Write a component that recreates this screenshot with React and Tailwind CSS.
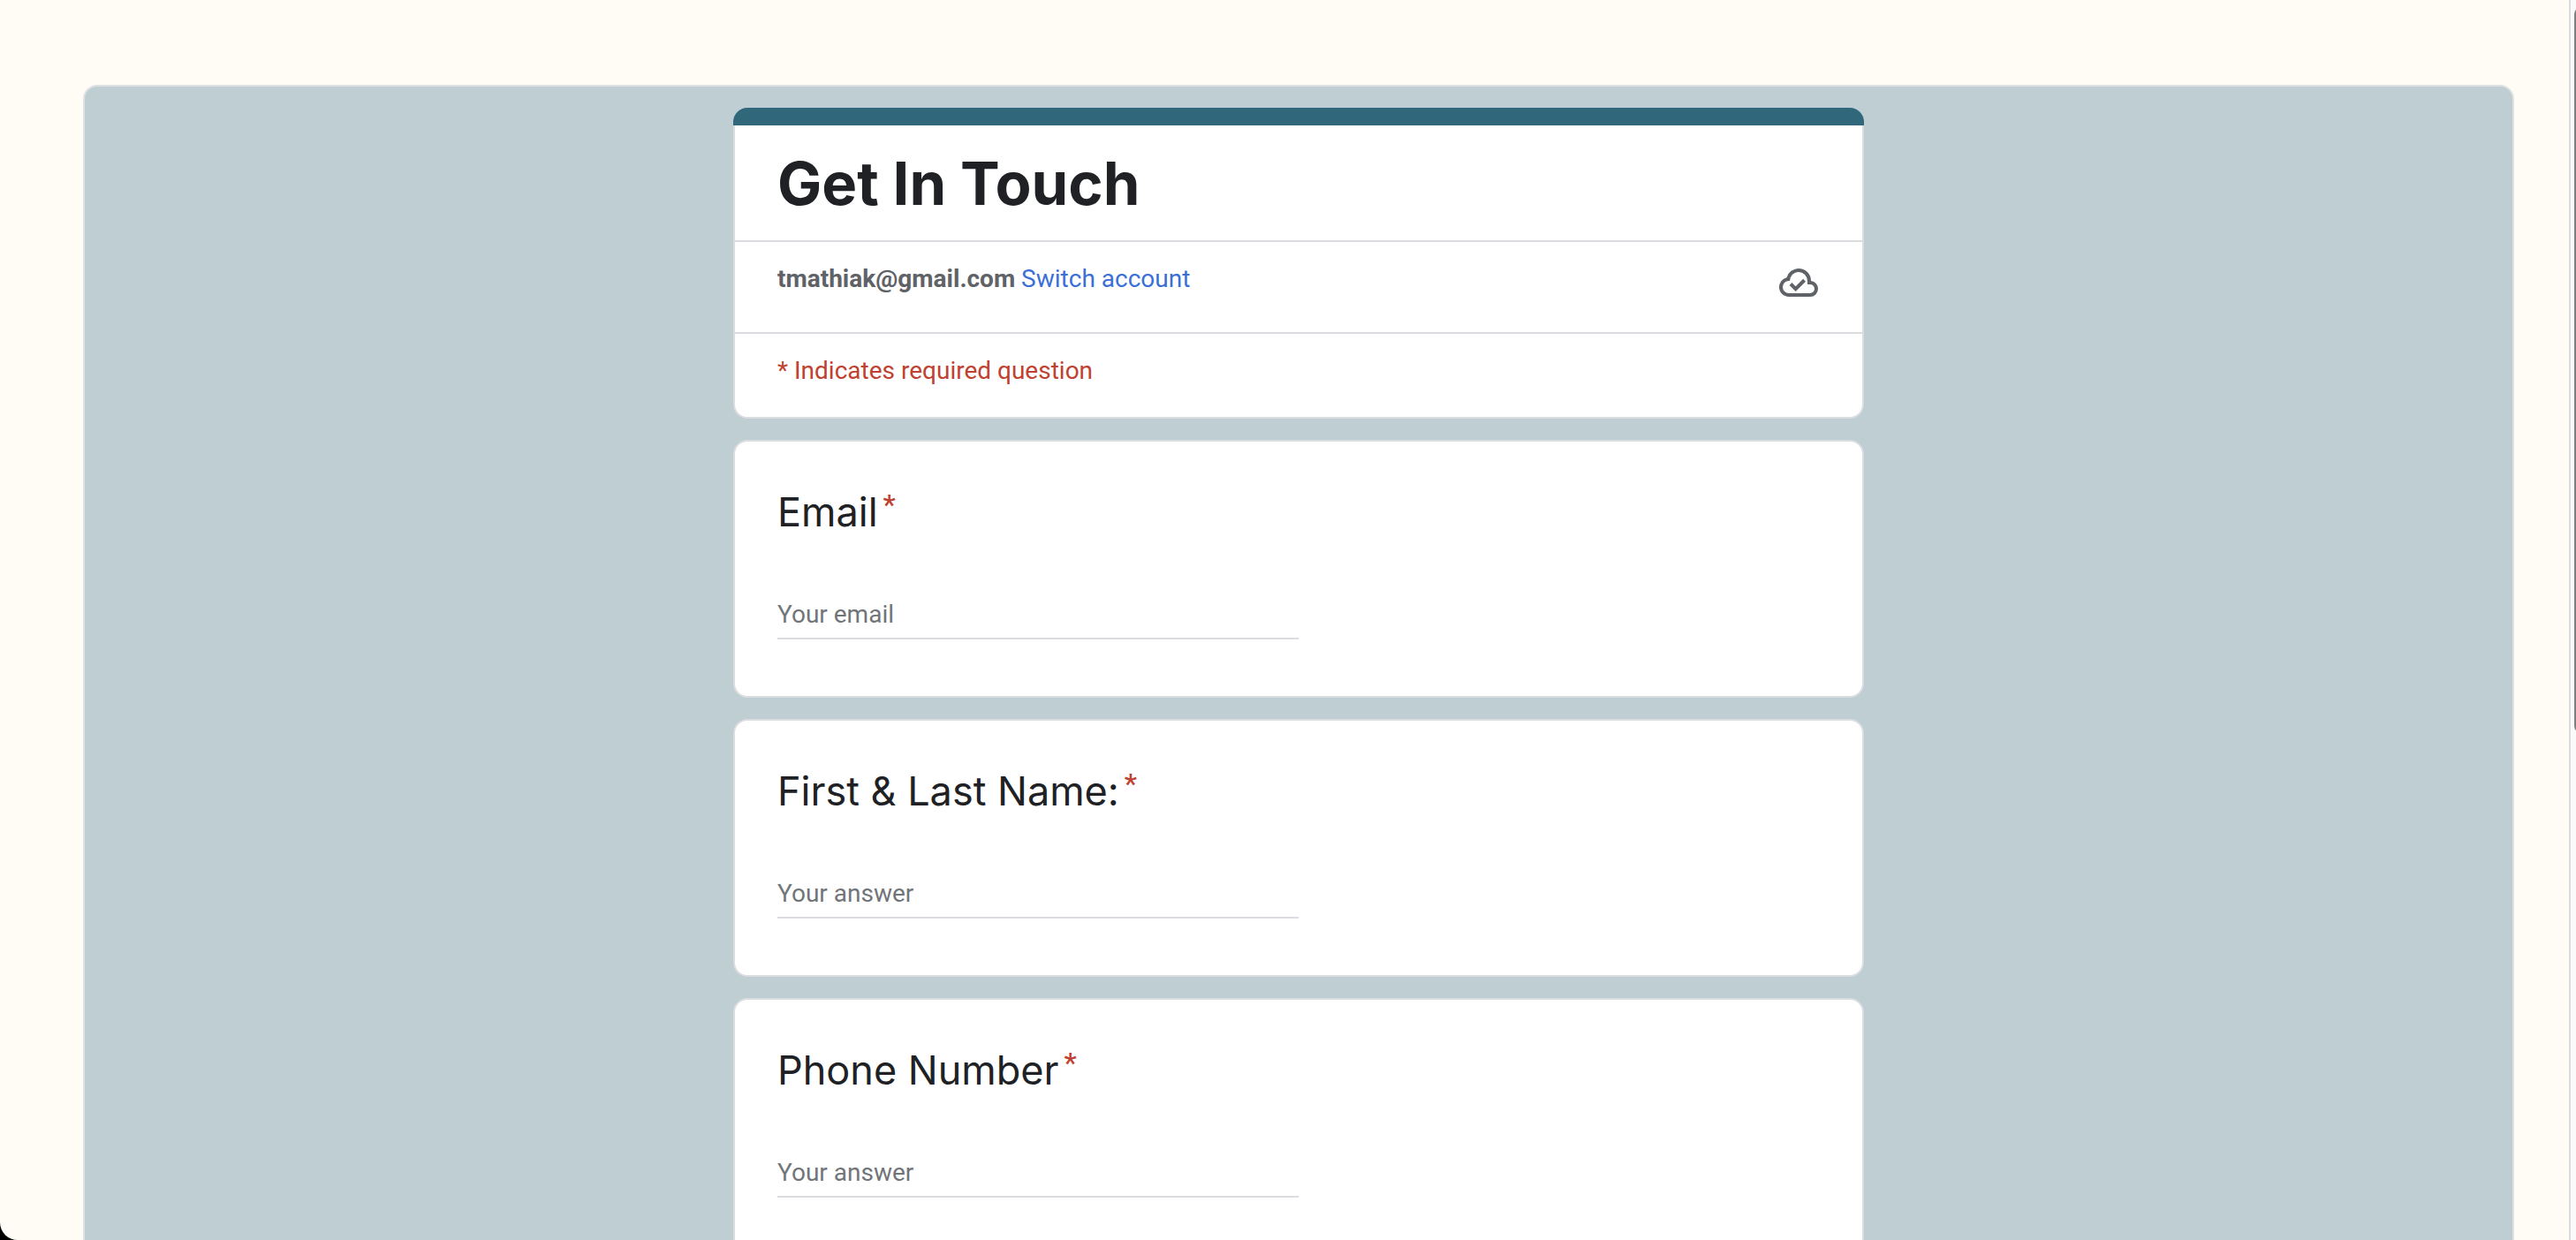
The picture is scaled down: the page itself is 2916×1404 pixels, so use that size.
const questions = [
  { id: 'email', label: 'Email', placeholder: 'Your email', type: 'email' },
  { id: 'name', label: 'First & Last Name:', placeholder: 'Your answer', type: 'text' },
  { id: 'phone', label: 'Phone Number', placeholder: 'Your answer', type: 'text' },
];

function CloudDone() {
  return (
    <svg viewBox="0 -960 960 960" className="size-12 shrink-0 fill-[#5f6368]" role="img" aria-label="Draft saved">
      <path d="m414-280 226-226-58-58-169 169-84-84-57 57 142 142ZM260-160q-91 0-155.5-63T40-377q0-78 47-139t123-78q25-92 100-149t170-57q117 0 198.5 81.5T760-520q69 8 114.5 59.5T920-340q0 75-52.5 127.5T740-160H260Zm0-80h480q42 0 71-29t29-71q0-42-29-71t-71-29h-60v-80q0-83-58.5-141.5T480-720q-83 0-141.5 58.5T280-520h-20q-58 0-99 41t-41 99q0 58 41 99t99 41Z" />
    </svg>
  );
}

function FormHeader() {
  return (
    <header>
      <div className="h-5 rounded-t-2xl bg-[#30677b]" />
      <div className="rounded-b-2xl border-x-2 border-b-2 border-[#dadce0] bg-white">
        <h1 className="px-12 pt-[26px] pb-6 font-['Inter',sans-serif] text-[67px] leading-[80px] font-bold text-[#202124]">
          Get In Touch
        </h1>
        <div className="flex items-start justify-between border-t-2 border-[#dadce0] px-12 pt-[22px] pb-8">
          <p className="pt-0.5 text-[28px] leading-9">
            <span className="font-bold text-[#5f6368]">tmathiak@gmail.com</span>{' '}
            <a href="#switch" className="text-[#3b6fd6]">Switch account</a>
          </p>
          <CloudDone />
        </div>
        <p className="border-t-2 border-[#dadce0] px-12 pt-6 pb-[34px] text-[28px] leading-9 text-[#c04130]">
          * Indicates required question
        </p>
      </div>
    </header>
  );
}

function Question({ id, label, placeholder, type }) {
  return (
    <section className="rounded-2xl border-2 border-[#dadce0] bg-white px-12 pt-12 pb-16">
      <label htmlFor={id} className="flex items-start gap-1.5 leading-[64px] text-[#202124]">
        <span className="font-['Inter',sans-serif] text-[45px]">{label}</span>
        <span className="text-[32px] leading-[46px] font-medium text-[#c04130]">*</span>
      </label>
      <input
        id={id}
        type={type}
        placeholder={placeholder}
        className="mt-[60px] block h-[52px] w-1/2 border-b-2 border-[#dadce0] bg-transparent pb-1 text-[28px] outline-none placeholder:text-[#70757a]"
      />
    </section>
  );
}

export default function App() {
  return (
    <div className="h-screen bg-black font-['Roboto',sans-serif]">
      <div className="flex h-full overflow-hidden rounded-bl-[20px] bg-[#fffcf5]">
        <main className="min-w-0 flex-1 pt-24 pr-[62px] pl-[94px]">
          <div className="rounded-2xl border-2 border-[#dfe2e3] bg-[#bfced2] pt-6 pb-24">
            <form className="mx-auto flex max-w-[1280px] flex-col gap-6">
              <FormHeader />
              {questions.map((q) => (
                <Question key={q.id} {...q} />
              ))}
            </form>
          </div>
        </main>
        <div className="w-2 shrink-0 overflow-hidden border-l-2 border-[#dcdcdc] bg-[#fafafa] pt-2 pl-1">
          <div className="h-[822px] w-4 rounded-full bg-[#7f7f7f]" />
        </div>
      </div>
    </div>
  );
}
